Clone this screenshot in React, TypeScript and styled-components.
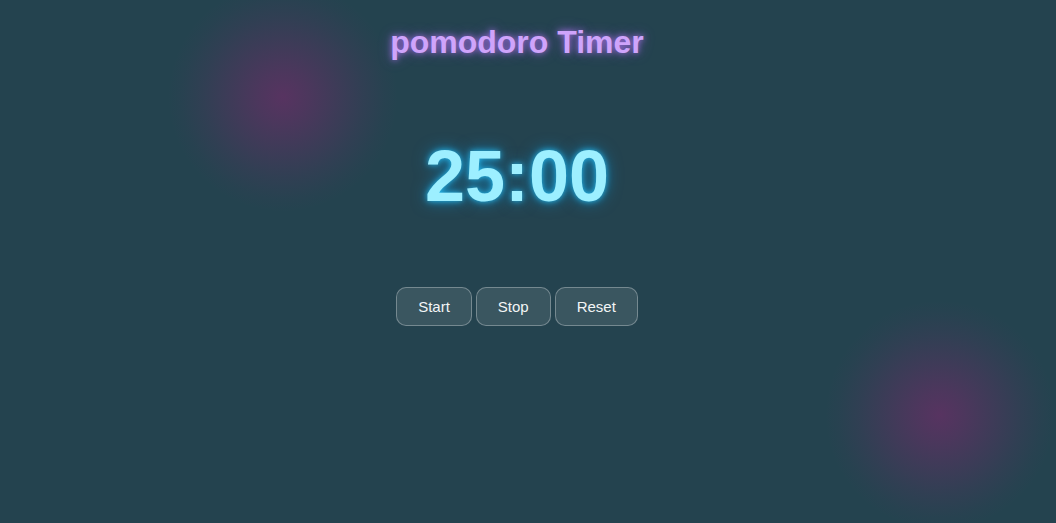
import React from "react";
import styled, { createGlobalStyle } from "styled-components";

const Global = createGlobalStyle`
  html, body { margin: 0; padding: 0; }
  body {
    background: #24434f;
    font-family: "Liberation Sans", Arial, sans-serif;
    overflow: hidden;
  }
`;

const Page = styled.div`
  position: relative;
  width: 1056px;
  height: 523px;
  overflow: hidden;
  background: #24434f;
`;

const Blob = styled.div<{ $x: number; $y: number }>`
  position: absolute;
  left: ${(p) => p.$x - 115}px;
  top: ${(p) => p.$y - 115}px;
  width: 230px;
  height: 230px;
  background: radial-gradient(
    circle closest-side,
    rgba(158, 30, 121, 0.42) 0%,
    rgba(158, 30, 121, 0.33) 22%,
    rgba(158, 30, 121, 0.22) 45%,
    rgba(158, 30, 121, 0.1) 70%,
    rgba(158, 30, 121, 0.03) 88%,
    rgba(158, 30, 121, 0) 100%
  );
  pointer-events: none;
`;

const Main = styled.main`
  position: relative;
  display: flex;
  flex-direction: column;
  align-items: center;
  width: 1034px;
`;

const Title = styled.h1`
  margin: 24px 0 0;
  font-size: 32px;
  line-height: 37px;
  font-weight: 700;
  color: #cfa4fb;
  text-shadow: 0 0 6px rgba(190, 120, 255, 0.8), 0 0 14px rgba(170, 100, 255, 0.45);
`;

const Timer = styled.div`
  margin-top: 74px;
  font-size: 72px;
  line-height: 83px;
  font-weight: 700;
  color: #9defff;
  text-shadow: 0 0 6px rgba(40, 200, 255, 0.9), 0 0 16px rgba(0, 170, 255, 0.55);
`;

const Controls = styled.div`
  display: flex;
  gap: 4px;
  margin-top: 69px;
`;

const Button = styled.button`
  height: 39px;
  padding: 0 21px;
  border: 1px solid rgba(255, 255, 255, 0.3);
  border-radius: 10px;
  background: rgba(255, 255, 255, 0.1);
  color: #f2f5f6;
  font-family: "Liberation Sans", Arial, sans-serif;
  font-size: 15px;
  cursor: pointer;
`;

export default function App() {
  return (
    <Page>
      <Global />
      <Blob $x={283} $y={97} />
      <Blob $x={940} $y={415} />
      <Main>
        <Title>pomodoro Timer</Title>
        <Timer>25:00</Timer>
        <Controls>
          <Button>Start</Button>
          <Button>Stop</Button>
          <Button>Reset</Button>
        </Controls>
      </Main>
    </Page>
  );
}
